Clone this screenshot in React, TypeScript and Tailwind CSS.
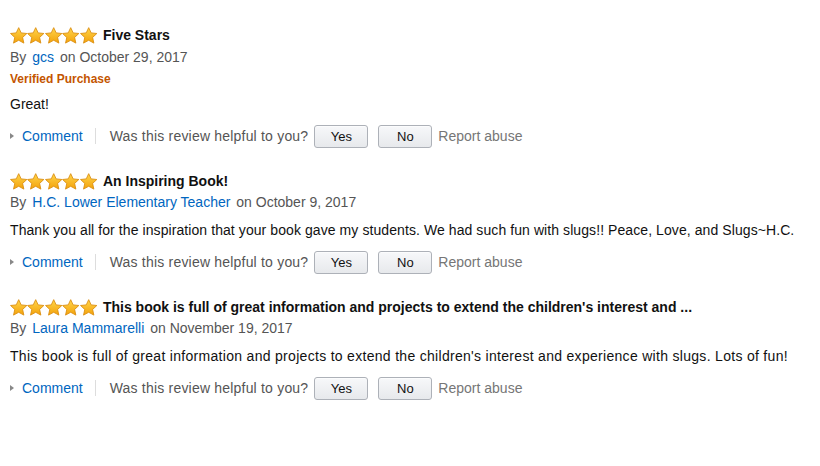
import React from "react";

type Review = {
  title: string;
  author: string;
  date: string;
  verified?: boolean;
  body: string;
  bodyTrack: string;
};

const reviews: Review[] = [
  { title: "Five Stars", author: "gcs", date: "October 29, 2017", verified: true, body: "Great!", bodyTrack: "" },
  {
    title: "An Inspiring Book!",
    author: "H.C. Lower Elementary Teacher",
    date: "October 9, 2017",
    body: "Thank you all for the inspiration that your book gave my students. We had such fun with slugs!! Peace, Love, and Slugs~H.C.",
    bodyTrack: "tracking-[0.08px]",
  },
  {
    title: "This book is full of great information and projects to extend the children's interest and ...",
    author: "Laura Mammarelli",
    date: "November 19, 2017",
    body: "This book is full of great information and projects to extend the children's interest and experience with slugs. Lots of fun!",
    bodyTrack: "tracking-[0.3px]",
  },
];

const Star = ({ id }: { id: string }) => (
  <svg width="17.4" height="17" viewBox="0.7 0.6 22.6 21.8" className="block">
    <defs>
      <linearGradient id={id} x1="0" y1="0" x2="0" y2="1">
        <stop offset="0%" stopColor="#ffd54a" />
        <stop offset="100%" stopColor="#f3a20c" />
      </linearGradient>
    </defs>
    <path
      d="M12 1.3l3.2 6.8 7.4.8-5.5 5.1 1.6 7.4L12 17.7l-6.7 3.7 1.6-7.4-5.5-5.1 7.4-.8z"
      fill={`url(#${id})`}
      stroke="#d98b0b"
      strokeWidth="1.1"
      strokeLinejoin="round"
    />
  </svg>
);

const Stars = ({ idx }: { idx: number }) => (
  <div className="flex">
    {[0, 1, 2, 3, 4].map((i) => (
      <Star key={i} id={`star-${idx}-${i}`} />
    ))}
  </div>
);

const VoteButton = ({ label }: { label: string }) => (
  <button className="h-[23px] w-[54px] rounded-[3px] border border-[#adb1b8] bg-gradient-to-b from-[#f7f8fa] to-[#e7e9ec] text-[13px] leading-none text-[#111] shadow-[0_1px_0_rgba(255,255,255,0.6)_inset]">
    {label}
  </button>
);

const ReviewItem = ({ review, idx }: { review: Review; idx: number }) => (
  <div className={idx === 0 ? "" : "mt-[24px]"}>
    {/* title row */}
    <div className="flex h-[19px] items-center">
      <Stars idx={idx} />
      <span className="ml-[6px] text-[14px] font-bold text-[#111]">{review.title}</span>
    </div>
    {/* author */}
    <div className={`${idx === 0 ? "mt-[3px]" : "mt-[2px]"} h-[19px] leading-[19px] text-[14px] text-[#555]`}>
      By <a className="ml-[2px] mr-[2px] text-[#0066c0]">{review.author}</a> on {review.date}
    </div>
    {review.verified && (
      <div className="mt-[4px] h-[16px] leading-[16px] text-[12px] font-bold text-[#c45500]">Verified Purchase</div>
    )}
    <div
      className={`${review.verified ? "mt-[8px]" : "mt-[9px]"} h-[19px] leading-[19px] text-[14px] text-[#111] ${review.bodyTrack}`}
    >
      {review.body}
    </div>
    {/* actions */}
    <div className="mt-[10px] flex h-[24px] items-center text-[14px]">
      <span className="mr-[8px] h-0 w-0 border-y-[3.5px] border-l-[4px] border-y-transparent border-l-[#888]" />
      <a className="text-[#0066c0]">Comment</a>
      <span className="ml-[12px] h-[16px] w-px bg-[#ddd]" />
      <span className="ml-[14px] tracking-[0.2px] text-[#555]">Was this review helpful to you?</span>
      <span className="ml-[6px]">
        <VoteButton label="Yes" />
      </span>
      <span className="ml-[10px]">
        <VoteButton label="No" />
      </span>
      <span className="ml-[6px] text-[#767676]">Report abuse</span>
    </div>
  </div>
);

export default function App() {
  return (
    <div
      className="min-h-[466px] w-[820px] bg-white pl-[10px] pt-[26px]"
      style={{ fontFamily: '"Liberation Sans", Arial, sans-serif' }}
    >
      {reviews.map((r, i) => (
        <ReviewItem key={i} review={r} idx={i} />
      ))}
    </div>
  );
}
